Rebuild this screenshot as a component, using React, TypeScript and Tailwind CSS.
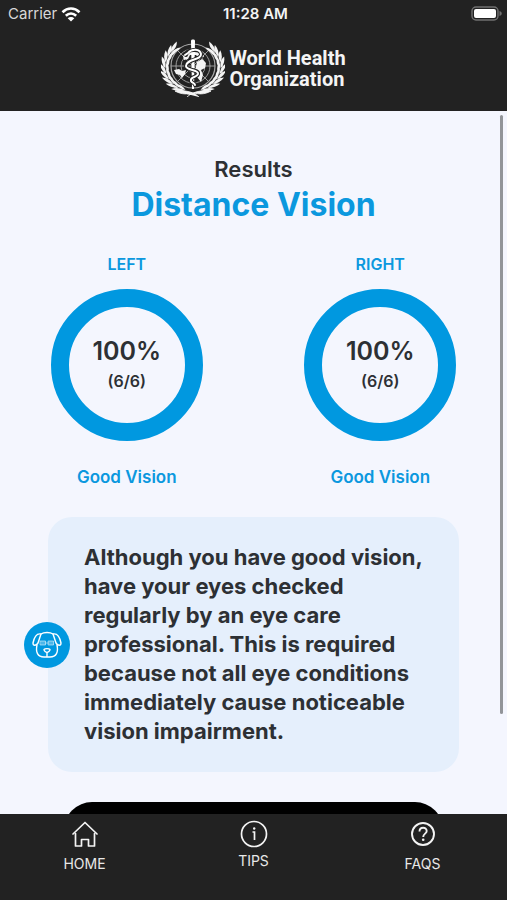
const eyes = [
  { side: "LEFT", score: "100%", ratio: "(6/6)", verdict: "Good Vision" },
  { side: "RIGHT", score: "100%", ratio: "(6/6)", verdict: "Good Vision" },
];

const leafAngles = [28, 42, 56, 70, 84, 98, 112, 126, 138];

const Laurel = () => (
  <g transform="translate(-4.500 0) scale(1.140 1)">
    <path d="M32 54 C20 54 7 45 6.500 29 C6.500 21 9 15 14 10" fill="none" stroke="#e4e4e4" strokeWidth="0.6" />
    {leafAngles.map((a) => (
      <g key={a} transform={`rotate(${a} 32 28)`}>
        <path d="M25.500 56.500 C28 53 32 51.700 36.500 52 C34 55 30 56.500 25.500 56.500Z" fill="#f4f4f4" />
        <path d="M27 49.800 C30 48.600 34 49 37 51.400 C33 52.300 30 51.800 27 49.800Z" fill="#f4f4f4" />
      </g>
    ))}
  </g>
);

const Emblem = () => (
  <svg viewBox="0 0 64 58" className="h-[58px] w-16" aria-hidden="true">
    <g fill="none" stroke="#a8a8a8" strokeWidth="0.9">
      <circle cx="32" cy="27" r="22" strokeWidth="1.2" />
      <circle cx="32" cy="27" r="17" />
      <circle cx="32" cy="27" r="12" />
      <circle cx="32" cy="27" r="6" />
      <path d="M10 27H54M17 12L47 42M47 12L17 42" />
    </g>
    <path
      d="M13 31L18 30L21 32L25 31L24 35L21 39L19 36L15 35ZM36 23L41 20L45 24L44 29L40 31L42 36L40 43L36 38L34 32ZM22 17L27 12L34 9L41 13L43 18L38 19L35 16L29 16L27 20L23 21Z"
      fill="#f4f4f4"
    />
    <Laurel />
    <g transform="translate(64 0) scale(-1 1)">
      <Laurel />
    </g>
    <path d="M14 52C21 51 27 52 32 54C37 52 43 51 50 52C43 56 37 55 33 54L38 58M31 54C27 55 21 56 14 52M31 54L26 58" fill="#f4f4f4" stroke="#f4f4f4" strokeWidth="0.8" />
    <path d="M30 1.500C30 0 34 0 34 1.500L33 50H31Z" fill="#fff" />
    <g fill="none" strokeLinecap="round">
      <path d="M25 16C26 10 39 9 40 15C41 21 25 20 25 27C25 32 38 30 37 35C36 39 29 37 30 42C31 44 34 44 34 46" stroke="#222" strokeWidth="4" />
      <path d="M24 16L27 14C31 9 39 10 40 15C41 21 25 20 25 27C25 32 38 30 37 35C36 39 29 37 30 42C31 44 34 44 34 46" stroke="#fff" strokeWidth="2" />
    </g>
  </svg>
);

const Wifi = () => (
  <svg viewBox="0 0 20 15" className="h-[15px] w-5" aria-label="Wi-Fi">
    <g fill="none" stroke="#fff" strokeWidth="2.600">
      <path d="M1.500 5.200C6.500 0.300 13.500 0.300 18.500 5.200" />
      <path d="M4.800 8.700C8 5.700 12 5.700 15.200 8.700" />
    </g>
    <path d="M10 14.500L6.700 11.200C8.600 9.600 11.400 9.600 13.300 11.200Z" fill="#fff" />
  </svg>
);

const Battery = () => (
  <svg viewBox="0 0 32 16" className="h-4 w-8" aria-label="Battery">
    <rect x="1" y="1" width="26" height="13" rx="4" fill="none" stroke="#707070" strokeWidth="1.400" />
    <rect x="3" y="3" width="22" height="9" rx="2" fill="#fff" />
    <path d="M28.500 5C31.500 6 31.500 9 28.500 10Z" fill="#707070" />
  </svg>
);

const Dog = () => (
  <svg viewBox="0 0 30 28" className="h-7 w-[30px]" fill="none" stroke="#fff" strokeWidth="1.400" strokeLinecap="round" strokeLinejoin="round" aria-hidden="true">
    <path d="M9 3C12 1 18 1 21 3M5 14C3.500 21 5.500 26 12 26H18C24.500 26 26.500 21 25 14" />
    <path d="M9 3C4 2 2 7 1 12C1 15 4 15 6 12C7 9 8 6 9 3" />
    <path d="M21 3C26 2 28 7 29 12C29 15 26 15 24 12C23 9 22 6 21 3" />
    <path d="M8.500 10H13.500V14H8.500ZM16.500 10H21.500V14H16.500ZM13.500 12H16.500" fill="#fff" fillOpacity="0.300" strokeWidth="1" strokeOpacity="0.500" />
    <path d="M12 18.500C13 17.300 17 17.300 18 18.500C18 20 16 21.500 15 21.500C14 21.500 12 20 12 18.500ZM15 21.500V25.500" />
  </svg>
);

const Home = () => (
  <svg viewBox="0 0 28 28" className="size-7" fill="none" stroke="#f4f4f4" strokeWidth="1.700" strokeLinejoin="round" strokeLinecap="round" aria-hidden="true">
    <path d="M2 14L14 2.500L26 14" />
    <path d="M4.500 13.500V26H10.500V19.500H17.500V26H23.500V13.500" />
  </svg>
);

const Info = () => (
  <svg viewBox="0 0 28 28" className="size-7" fill="none" stroke="#f4f4f4" strokeWidth="1.700" aria-hidden="true">
    <circle cx="14" cy="14" r="12.500" />
    <path d="M12.500 12H14.500V20" />
    <circle cx="14.200" cy="8.500" r="1.200" fill="#f4f4f4" stroke="none" />
  </svg>
);

const Question = () => (
  <svg viewBox="0 0 28 28" className="size-7" fill="none" stroke="#f4f4f4" strokeWidth="1.900" aria-hidden="true">
    <circle cx="14" cy="14" r="11" />
    <path d="M10.500 11.500C10.500 6.500 17.700 6.700 17.700 11C17.700 13.800 14.200 13.500 14.200 17" />
    <circle cx="14.200" cy="19.700" r="1.300" fill="#f4f4f4" stroke="none" />
  </svg>
);

const App = () => {
  return (
    <div className="flex h-screen flex-col bg-[#f4f6fe] font-['Inter',sans-serif] text-[#2d3034]">
      <header className="h-[111px] shrink-0 bg-[#222222] text-[#f4f4f4]">
        <div className="grid h-7 grid-cols-3 items-center pr-1 pl-2 text-[15px]">
          <div className="flex items-center gap-1 text-[#d8d8d8]">
            Carrier
            <Wifi />
          </div>
          <p className="text-center font-semibold">11:28 AM</p>
          <div className="flex justify-end">
            <Battery />
          </div>
        </div>
        <div className="flex items-center justify-center gap-1 pt-[11px]">
          <Emblem />
          <p className="pt-0.5 font-['Roboto',sans-serif] text-xl leading-[21px] font-bold">
            World Health
            <br />
            Organization
          </p>
        </div>
      </header>

      <div className="relative min-h-0 flex-1">
        <main className="h-full overflow-y-auto [scrollbar-width:none]">
          <div className="pt-11 text-center">
            <p className="text-[22px] leading-7 font-semibold">Results</p>
            <h1 className="pt-0.5 text-[32px] leading-10 font-bold text-[#0b98de]">Distance Vision</h1>
          </div>
          <div className="grid grid-cols-2 pt-[27px]">
            {eyes.map((eye) => (
              <section key={eye.side} className="flex flex-col items-center font-semibold">
                <h2 className="text-base leading-6 text-[#0b98de]">{eye.side}</h2>
                <div className="mt-[13px] flex size-[152px] flex-col items-center justify-center rounded-full border-[18px] border-[#0098e0]">
                  <p className="text-[25px] leading-8">{eye.score}</p>
                  <p className="text-base leading-7">{eye.ratio}</p>
                </div>
                <p className="mt-6 text-[17px] leading-6 text-[#0b98de]">{eye.verdict}</p>
              </section>
            ))}
          </div>
          <div className="relative mx-12 mt-7 rounded-3xl bg-[#e5effc] py-[26px] pr-6 pl-9">
            <p className="text-[22px] leading-[29px] font-bold">
              Although you have good vision, have your eyes checked regularly by an eye care professional. This is required because not all eye conditions immediately cause noticeable vision impairment.
            </p>
            <div className="absolute top-1/2 -left-6 flex size-[46px] -translate-y-1/2 items-center justify-center rounded-full bg-[#0098e0]">
              <Dog />
            </div>
          </div>
          <div className="px-16 pt-[30px] pb-8">
            <button type="button" aria-label="Continue" className="block h-14 w-full rounded-full bg-black"></button>
          </div>
        </main>
        <div className="absolute top-1 right-1 h-[599px] w-[3px] rounded-full bg-[#929599]"></div>
      </div>

      <nav className="grid h-[86px] shrink-0 grid-cols-3 items-start bg-[#222222] text-sm text-[#e8e8e8]">
        <a href="#home" className="flex flex-col items-center gap-1.5 pt-1.5">
          <Home />
          HOME
        </a>
        <a href="#tips" className="flex flex-col items-center gap-[3px] pt-1.5">
          <Info />
          TIPS
        </a>
        <a href="#faqs" className="flex flex-col items-center gap-1.5 pt-1.5">
          <Question />
          FAQS
        </a>
      </nav>
    </div>
  );
};

export default App;
